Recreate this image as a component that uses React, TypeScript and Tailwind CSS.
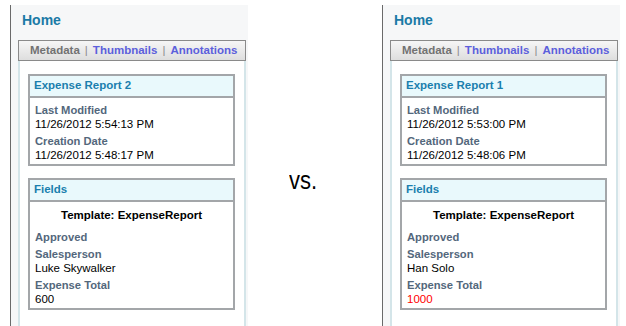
import React from "react";

type Field = { label: string; value?: string; red?: boolean };

function Card({ title, children }: { title: string; children: React.ReactNode }) {
  return (
    <div className="border-2 border-[#a3a6a9] bg-white">
      <div className="h-[22px] border-b-2 border-[#a3a6a9] bg-[#e9f9fc] pl-[4px] flex items-center text-[11.5px] font-bold text-[#1a7fae]">
        {title}
      </div>
      {children}
    </div>
  );
}

function Group({ f, first }: { f: Field; first?: boolean }) {
  return (
    <div className={first ? "" : "mt-[3px]"}>
      <div className="h-[14px] leading-[14px] text-[11.2px] font-bold text-[#53677c]">{f.label}</div>
      {f.value !== undefined && (
        <div className={"h-[14px] leading-[14px] text-[11.5px] " + (f.red ? "text-[#ff0000]" : "text-black")}>
          {f.value}
        </div>
      )}
    </div>
  );
}

function Column({
  n,
  modified,
  created,
  sales,
  total,
  red,
}: {
  n: string;
  modified: string;
  created: string;
  sales: string;
  total: string;
  red?: boolean;
}) {
  return (
    <div className="mt-[5px] w-[238px] h-[321px] border-l border-[#6a6a6a] bg-[#f6f7f8] flex flex-col">
      <div className="pt-[7px] pl-[11px] h-[16px] box-content leading-[16px] text-[14px] font-bold text-[#1b7aa6]">Home</div>
      <div className="mt-[12px] ml-[7px] w-[228px] h-[21px] border border-[#8a8a8a] bg-gradient-to-b from-[#f6f6f6] to-[#dedede] flex items-center pl-[11px] text-[11.5px] font-bold">
        <span className="text-[#727272]">Metadata</span>
        <span className="mx-[5px] font-normal text-[#8a8a8a]">|</span>
        <span className="text-[#5c5fdc]">Thumbnails</span>
        <span className="mx-[5px] font-normal text-[#8a8a8a]">|</span>
        <span className="text-[#5c5fdc]">Annotations</span>
      </div>
      <div className="ml-[7px] w-[228px] flex-1 border-x-2 border-[#d4e5e9] bg-white pt-[13px] pl-[8px] pr-[9px]">
        <Card title={"Expense Report " + n}>
          <div className="pt-[5px] pb-[2px] pl-[5px]">
            <Group f={{ label: "Last Modified", value: modified }} first />
            <Group f={{ label: "Creation Date", value: created }} />
          </div>
        </Card>
        <div className="h-[12px]" />
        <Card title="Fields">
          <div className="pt-[6px] pb-[2px] pl-[5px]">
            <div className="h-[14px] leading-[14px] text-[11.5px] font-bold text-black text-center pr-[5px] mb-[8px]">
              Template: ExpenseReport
            </div>
            <Group f={{ label: "Approved" }} first />
            <Group f={{ label: "Salesperson", value: sales }} />
            <Group f={{ label: "Expense Total", value: total, red }} />
          </div>
        </Card>
      </div>
    </div>
  );
}

export default function App() {
  return (
    <div
      className="w-[626px] h-[326px] bg-white flex overflow-hidden"
      style={{ fontFamily: '"Liberation Sans", Arial, sans-serif' }}
    >
      <div className="w-[10px] shrink-0" />
      <Column n="2" modified="11/26/2012 5:54:13 PM" created="11/26/2012 5:48:17 PM" sales="Luke Skywalker" total="600" />
      <div className="w-[134px] shrink-0 pl-[41px] pt-[169px]">
        <span className="inline-block text-[22px] leading-[24px] text-black scale-y-[1.15]">vs.</span>
      </div>
      <Column
        n="1"
        modified="11/26/2012 5:53:00 PM"
        created="11/26/2012 5:48:06 PM"
        sales="Han Solo"
        total="1000"
        red
      />
    </div>
  );
}
